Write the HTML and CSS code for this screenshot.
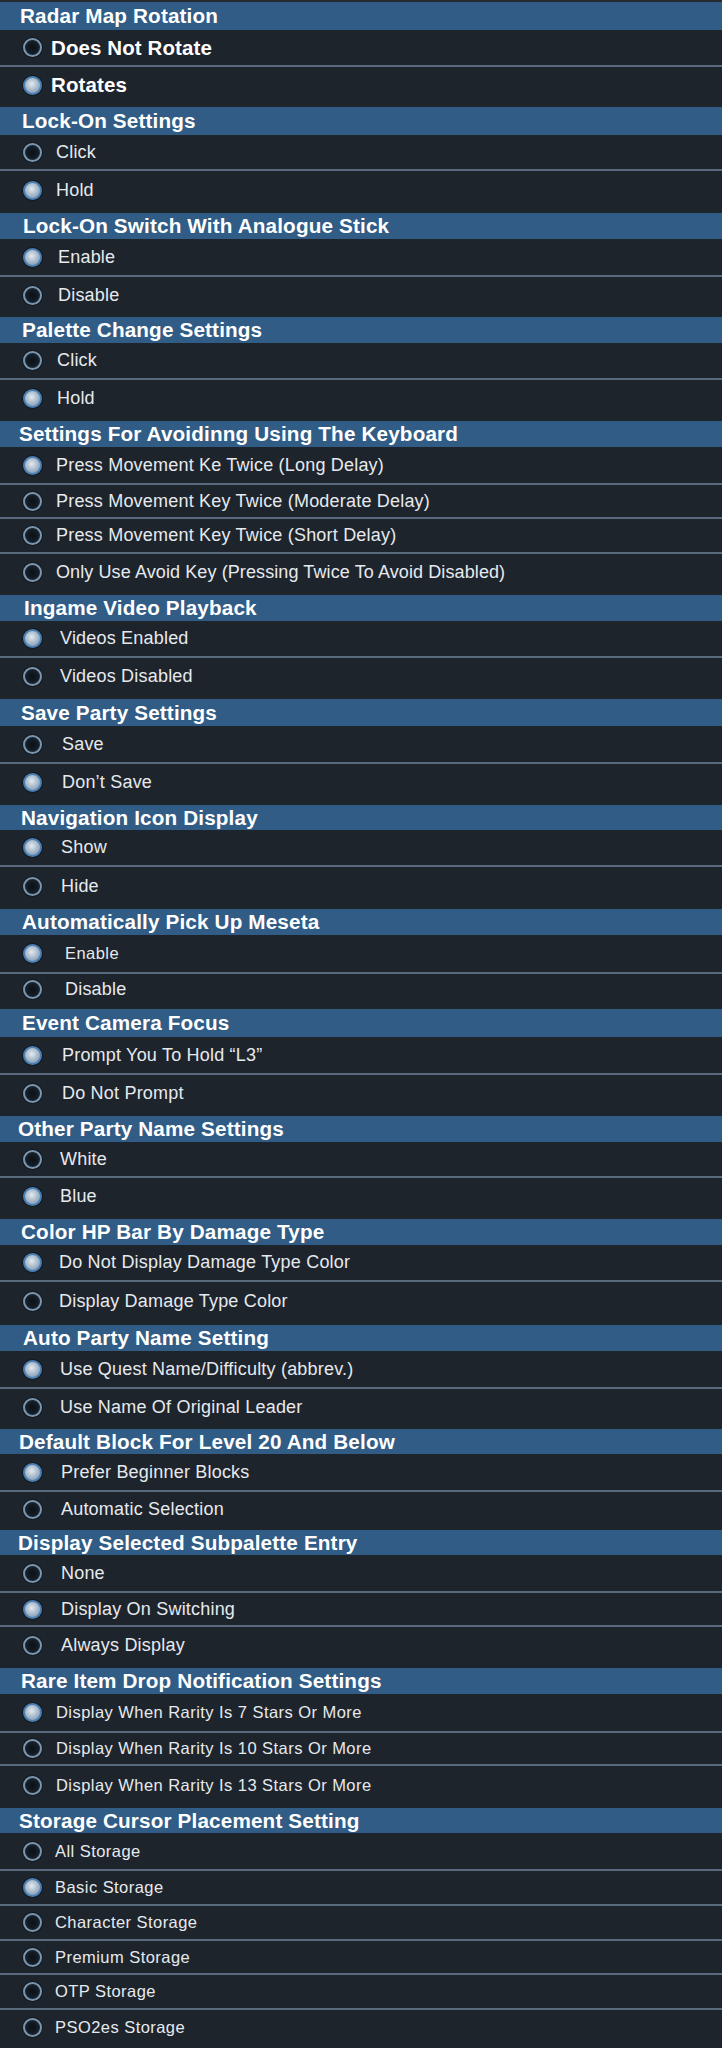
FILE: index.html
```html
<!DOCTYPE html>
<html lang="en">
<head>
<meta charset="utf-8">
<title>Settings</title>
<link rel="stylesheet" href="styles.css">
</head>
<body>
<div class="topstrip"></div>

<section class="sec s1">
  <h2 class="hdr h28">Radar Map Rotation</h2>
  <div class="row h35"><span class="radio"></span><span class="label big">Does Not Rotate</span></div>
  <div class="row h40 last"><span class="radio on"></span><span class="label big">Rotates</span></div>
</section>

<section class="sec s2">
  <h2 class="hdr h28">Lock-On Settings</h2>
  <div class="row h34"><span class="radio"></span><span class="label">Click</span></div>
  <div class="row h42 last"><span class="radio on"></span><span class="label">Hold</span></div>
</section>

<section class="sec s3">
  <h2 class="hdr h26">Lock-On Switch With Analogue Stick</h2>
  <div class="row h36"><span class="radio on"></span><span class="label">Enable</span></div>
  <div class="row h40 last"><span class="radio"></span><span class="label">Disable</span></div>
</section>

<section class="sec s4">
  <h2 class="hdr h26">Palette Change Settings</h2>
  <div class="row h35"><span class="radio"></span><span class="label">Click</span></div>
  <div class="row h41 last"><span class="radio on"></span><span class="label">Hold</span></div>
</section>

<section class="sec s5">
  <h2 class="hdr h26">Settings For Avoidinng Using The Keyboard</h2>
  <div class="row h36"><span class="radio on"></span><span class="label">Press Movement Ke Twice (Long Delay)</span></div>
  <div class="row h32"><span class="radio"></span><span class="label">Press Movement Key Twice (Moderate Delay)</span></div>
  <div class="row h33"><span class="radio"></span><span class="label">Press Movement Key Twice (Short Delay)</span></div>
  <div class="row h41 last"><span class="radio"></span><span class="label tight">Only Use Avoid Key (Pressing Twice To Avoid Disabled)</span></div>
</section>

<section class="sec s6">
  <h2 class="hdr h26">Ingame Video Playback</h2>
  <div class="row h35"><span class="radio on"></span><span class="label">Videos Enabled</span></div>
  <div class="row h41 last"><span class="radio"></span><span class="label">Videos Disabled</span></div>
</section>

<section class="sec s7">
  <h2 class="hdr h27">Save Party Settings</h2>
  <div class="row h36"><span class="radio"></span><span class="label">Save</span></div>
  <div class="row h41 last"><span class="radio on"></span><span class="label">Don’t Save</span></div>
</section>

<section class="sec s8">
  <h2 class="hdr h25">Navigation Icon Display</h2>
  <div class="row h35"><span class="radio on"></span><span class="label">Show</span></div>
  <div class="row h42 last"><span class="radio"></span><span class="label">Hide</span></div>
</section>

<section class="sec s9">
  <h2 class="hdr h26">Automatically Pick Up Meseta</h2>
  <div class="row h37"><span class="radio on"></span><span class="label small">Enable</span></div>
  <div class="row h35 last"><span class="radio"></span><span class="label">Disable</span></div>
</section>

<section class="sec s10">
  <h2 class="hdr h28">Event Camera Focus</h2>
  <div class="row h36"><span class="radio on"></span><span class="label">Prompt You To Hold “L3”</span></div>
  <div class="row h41 last"><span class="radio"></span><span class="label">Do Not Prompt</span></div>
</section>

<section class="sec s11">
  <h2 class="hdr h26">Other Party Name Settings</h2>
  <div class="row h34"><span class="radio"></span><span class="label">White</span></div>
  <div class="row h41 last"><span class="radio on"></span><span class="label">Blue</span></div>
</section>

<section class="sec s12">
  <h2 class="hdr h26">Color HP Bar By Damage Type</h2>
  <div class="row h35"><span class="radio on"></span><span class="label">Do Not Display Damage Type Color</span></div>
  <div class="row h43 last"><span class="radio"></span><span class="label">Display Damage Type Color</span></div>
</section>

<section class="sec s13">
  <h2 class="hdr h26">Auto Party Name Setting</h2>
  <div class="row h36"><span class="radio on"></span><span class="label">Use Quest Name/Difficulty (abbrev.)</span></div>
  <div class="row h40 last"><span class="radio"></span><span class="label">Use Name Of Original Leader</span></div>
</section>

<section class="sec s14">
  <h2 class="hdr h25">Default Block For Level 20 And Below</h2>
  <div class="row h36"><span class="radio on"></span><span class="label">Prefer Beginner Blocks</span></div>
  <div class="row h38 last"><span class="radio"></span><span class="label">Automatic Selection</span></div>
</section>

<section class="sec s15">
  <h2 class="hdr h25">Display Selected Subpalette Entry</h2>
  <div class="row h36"><span class="radio"></span><span class="label">None</span></div>
  <div class="row h32"><span class="radio on"></span><span class="label">Display On Switching</span></div>
  <div class="row h41 last"><span class="radio"></span><span class="label">Always Display</span></div>
</section>

<section class="sec s16">
  <h2 class="hdr h26">Rare Item Drop Notification Settings</h2>
  <div class="row h37"><span class="radio on"></span><span class="label small">Display When Rarity Is 7 Stars Or More</span></div>
  <div class="row h31"><span class="radio"></span><span class="label small">Display When Rarity Is 10 Stars Or More</span></div>
  <div class="row h42 last"><span class="radio"></span><span class="label small">Display When Rarity Is 13 Stars Or More</span></div>
</section>

<section class="sec s17">
  <h2 class="hdr h25">Storage Cursor Placement Setting</h2>
  <div class="row h36"><span class="radio"></span><span class="label small">All Storage</span></div>
  <div class="row h33"><span class="radio on"></span><span class="label small">Basic Storage</span></div>
  <div class="row h33"><span class="radio"></span><span class="label small">Character Storage</span></div>
  <div class="row h32"><span class="radio"></span><span class="label small">Premium Storage</span></div>
  <div class="row h33"><span class="radio"></span><span class="label small">OTP Storage</span></div>
  <div class="row h38 last"><span class="radio"></span><span class="label small">PSO2es Storage</span></div>
</section>
</body>
</html>
```

FILE: styles.css
```css
html, body {
  margin: 0;
  padding: 0;
  background: #1e242c;
}

body {
  width: 722px;
  font-family: "Liberation Sans", Arial, Helvetica, sans-serif;
  color: #e6eaef;
}

.topstrip {
  height: 2px;
  background: #262b31;
}

.sec {
  --tx: 57px;
  --hx: 21px;
}

.hdr {
  margin: 0;
  box-sizing: border-box;
  display: flex;
  align-items: center;
  padding-left: var(--hx);
  background: #315c85;
  color: #ffffff;
  font-size: 20.7px;
  font-weight: bold;
  letter-spacing: 0.15px;
  white-space: nowrap;
}

.h25 { height: 25px; }
.h26 { height: 26px; }
.h27 { height: 27px; }
.h28 { height: 28px; }
.h31 { height: 31px; }
.h32 { height: 32px; }
.h33 { height: 33px; }
.h34 { height: 34px; }
.h35 { height: 35px; }
.h36 { height: 36px; }
.h37 { height: 37px; }
.h38 { height: 38px; }
.h40 { height: 40px; }
.h41 { height: 41px; }
.h42 { height: 42px; }
.h43 { height: 43px; }

.row {
  box-sizing: content-box;
  display: flex;
  align-items: center;
  border-bottom: 2px solid #5a6a7e;
}

.row.last {
  border-bottom: none;
  box-sizing: border-box;
  padding-bottom: 4px;
}

.radio {
  flex: none;
  box-sizing: border-box;
  width: 19px;
  height: 19px;
  margin-left: 23px;
  border-radius: 50%;
  border: 2px solid #7a96ae;
  background: radial-gradient(circle at 50% 50%, #0b1118 0%, #121a23 45%, #26323f 100%);
  box-shadow: 0 0 0 1px #121921;
}

.radio.on {
  border-color: #4a7fb3;
  background: radial-gradient(circle at 45% 40%, #e4eaf0 0%, #bac7d4 35%, #8aa2bb 75%, #6a8cae 100%);
}

.label {
  margin-left: calc(var(--tx) - 42px);
  font-size: 18px;
  letter-spacing: 0.2px;
  white-space: nowrap;
}

.label.big {
  font-size: 20.5px;
  font-weight: bold;
  color: #ffffff;
  letter-spacing: 0.1px;
}

.label.tight {
  letter-spacing: 0.1px;
}

.label.small {
  font-size: 16.5px;
  letter-spacing: 0.45px;
}

.s1 { --tx: 51px; --hx: 20px; }
.s2 { --tx: 56px; --hx: 22px; }
.s3 { --tx: 58px; --hx: 23px; }
.s4 { --tx: 57px; --hx: 22px; }
.s5 { --tx: 56px; --hx: 19px; }
.s6 { --tx: 60px; --hx: 24px; }
.s7 { --tx: 62px; --hx: 21px; }
.s8 { --tx: 61px; --hx: 21px; }
.s9 { --tx: 65px; --hx: 22px; }
.s10 { --tx: 62px; --hx: 22px; }
.s11 { --tx: 60px; --hx: 18px; }
.s12 { --tx: 59px; --hx: 21px; }
.s13 { --tx: 60px; --hx: 23px; }
.s14 { --tx: 61px; --hx: 19px; }
.s15 { --tx: 61px; --hx: 18px; }
.s16 { --tx: 56px; --hx: 21px; }
.s17 { --tx: 55px; --hx: 19px; }
```
